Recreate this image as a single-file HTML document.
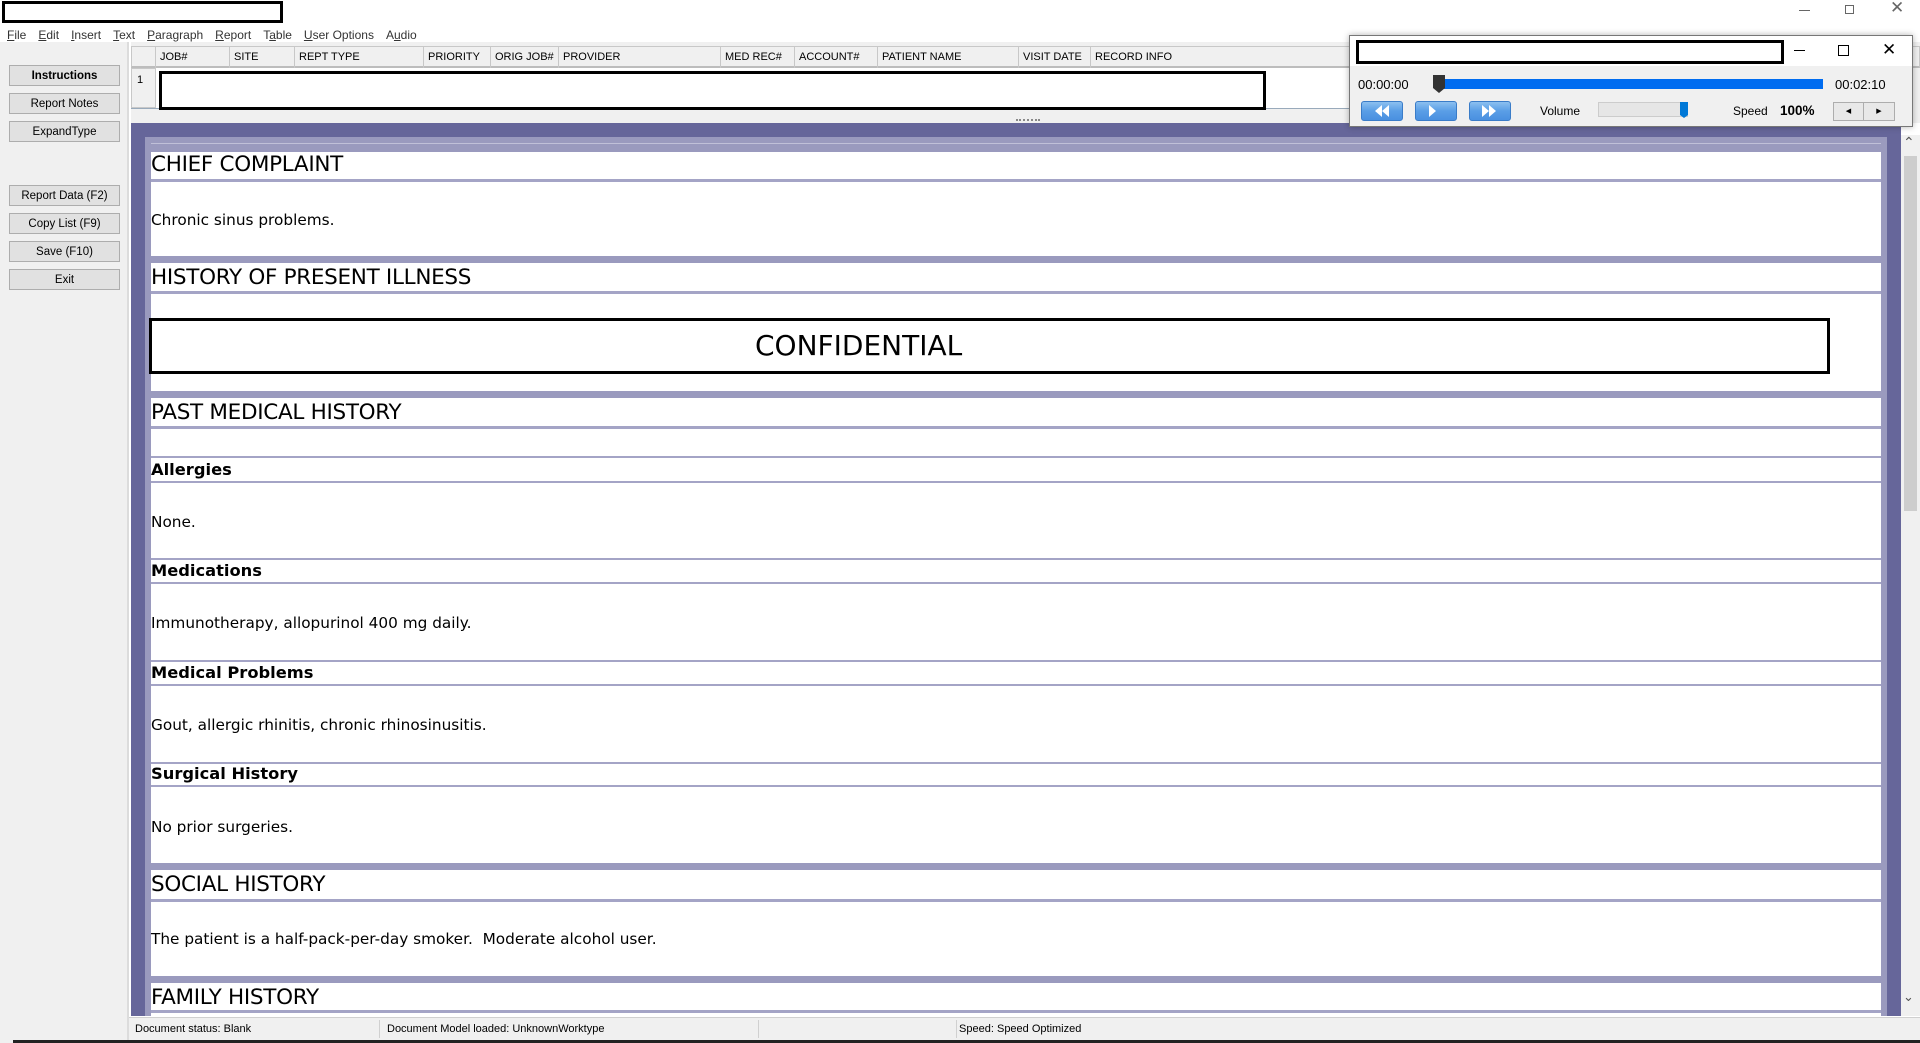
<!DOCTYPE html>
<html><head><meta charset="utf-8"><style>
*{margin:0;padding:0;box-sizing:border-box}
body{width:1920px;height:1043px;overflow:hidden;background:#fff;font-family:"Liberation Sans",sans-serif;position:relative}
.a{position:absolute}
.menu span{margin-right:12px;font-size:12px;color:#333}
.btn{position:absolute;left:9px;width:111px;height:21px;background:#e1e1e1;border:1px solid #adadad;font-size:11.5px;text-align:center;line-height:20px;color:#000}
.gh{position:absolute;top:47px;height:21px;font-size:11px;line-height:21px;padding-left:4px;border-right:1px solid #c8c8c8;color:#000}
.ed{font-family:"DejaVu Sans",sans-serif;color:#000}
.hd{position:absolute;left:151px;font-size:21.5px;white-space:nowrap;letter-spacing:-0.3px}
.tx{position:absolute;left:151px;font-size:15.3px;white-space:nowrap}
.sb{position:absolute;left:151px;font-size:16.3px;font-weight:bold;white-space:nowrap}
.band{position:absolute;left:151px;width:1730px;background:#9a9abe}
.ln{position:absolute;left:151px;width:1730px;height:2px;background:#a4a4c6}
.pb{position:absolute;top:101px;width:42px;height:20px;border:1px solid #3a7cc8;border-radius:3px;background:linear-gradient(#8cc0f0,#5a9ee6 50%,#4a90e0)}
</style></head><body>
<div class="a" style="left:2px;top:1px;width:281px;height:22px;border:3px solid #000"></div>
<div class="a menu" style="left:7px;top:26px"><span><u>F</u>ile</span><span><u>E</u>dit</span><span><u>I</u>nsert</span><span><u>T</u>ext</span><span><u>P</u>aragraph</span><span><u>R</u>eport</span><span>T<u>a</u>ble</span><span><u>U</u>ser Options</span><span>A<u>u</u>dio</span></div>
<div class="a" style="left:1799px;top:10px;width:11px;height:1px;background:#666"></div>
<div class="a" style="left:1845px;top:5px;width:9px;height:9px;border:1px solid #666"></div>
<div class="a" style="left:1890px;top:-2px;font-size:17px;color:#666">✕</div>
<!-- left panel -->
<div class="a" style="left:0;top:42px;width:129px;height:1001px;background:#f0f0f0;border-right:2px solid #dcdcdc"></div>
<div class="btn" style="top:65px;font-weight:bold">Instructions</div>
<div class="btn" style="top:93px">Report Notes</div>
<div class="btn" style="top:121px">ExpandType</div>
<div class="btn" style="top:185px">Report Data (F2)</div>
<div class="btn" style="top:213px">Copy List (F9)</div>
<div class="btn" style="top:241px">Save (F10)</div>
<div class="btn" style="top:269px">Exit</div>
<!-- grid -->
<div class="a" style="left:131px;top:42px;width:1789px;height:81px;background:#f0f0f0"></div>
<div class="a" style="left:131px;top:46px;width:1789px;height:22px;background:#f0f0f0;border:1px solid #c8c8c8;border-bottom:2px solid #bdbdbd"></div>
<div class="gh" style="left:131px;width:25px"></div>
<div class="gh" style="left:156px;width:74px">JOB#</div>
<div class="gh" style="left:230px;width:65px">SITE</div>
<div class="gh" style="left:295px;width:129px">REPT TYPE</div>
<div class="gh" style="left:424px;width:67px">PRIORITY</div>
<div class="gh" style="left:491px;width:68px">ORIG JOB#</div>
<div class="gh" style="left:559px;width:162px">PROVIDER</div>
<div class="gh" style="left:721px;width:74px">MED REC#</div>
<div class="gh" style="left:795px;width:83px">ACCOUNT#</div>
<div class="gh" style="left:878px;width:141px">PATIENT NAME</div>
<div class="gh" style="left:1019px;width:72px">VISIT DATE</div>
<div class="gh" style="left:1091px;width:260px">RECORD INFO</div>
<div class="a" style="left:131px;top:68px;width:25px;height:40px;background:#f0f0f0;border:1px solid #c8c8c8;font-size:11px;padding:5px 0 0 5px">1</div>
<div class="a" style="left:156px;top:68px;width:1200px;height:40px;background:#fff"></div>
<div class="a" style="left:131px;top:108px;width:1220px;height:1px;background:#9ab"></div>
<div class="a" style="left:159px;top:71px;width:1107px;height:39px;border:3px solid #000"></div>
<div class="a" style="left:1016px;top:119px;width:24px;height:2px;border-top:2px dotted #888"></div>
<!-- editor -->
<div class="a" style="left:131px;top:123px;width:1770px;height:893px;background:#66669a"></div>
<div class="a" style="left:145px;top:137px;width:1742px;height:879px;background:#9a9abe"></div>
<div class="a" style="left:151px;top:146px;width:1730px;height:870px;background:#fff"></div>
<div class="band" style="top:146px;height:6px"></div>
<div class="band" style="top:143px;height:1px;background:#c0c0d8"></div>
<div class="ed">
<div class="hd" style="top:152px">CHIEF COMPLAINT</div>
<div class="ln" style="top:179px;height:3px"></div>
<div class="tx" style="top:211px">Chronic sinus problems.</div>
<div class="band" style="top:256px;height:7px"></div>
<div class="hd" style="top:265px">HISTORY OF PRESENT ILLNESS</div>
<div class="ln" style="top:291px;height:3px"></div>
<div class="a" style="left:149px;top:318px;width:1681px;height:56px;border:3px solid #000;font-size:28px;padding-left:603px;line-height:50px;white-space:nowrap">CONFIDENTIAL</div>
<div class="band" style="top:391px;height:7px"></div>
<div class="hd" style="top:400px">PAST MEDICAL HISTORY</div>
<div class="ln" style="top:426px;height:3px"></div>
<div class="ln" style="top:456px"></div>
<div class="sb" style="top:460px">Allergies</div>
<div class="ln" style="top:481px"></div>
<div class="tx" style="top:513px">None.</div>
<div class="ln" style="top:558px"></div>
<div class="sb" style="top:561px">Medications</div>
<div class="ln" style="top:582px"></div>
<div class="tx" style="top:614px">Immunotherapy, allopurinol 400 mg daily.</div>
<div class="ln" style="top:660px"></div>
<div class="sb" style="top:663px">Medical Problems</div>
<div class="ln" style="top:684px"></div>
<div class="tx" style="top:716px">Gout, allergic rhinitis, chronic rhinosinusitis.</div>
<div class="ln" style="top:762px"></div>
<div class="sb" style="top:764px">Surgical History</div>
<div class="ln" style="top:785px"></div>
<div class="tx" style="top:818px">No prior surgeries.</div>
<div class="band" style="top:863px;height:7px"></div>
<div class="hd" style="top:872px">SOCIAL HISTORY</div>
<div class="ln" style="top:899px;height:3px"></div>
<div class="tx" style="top:930px">The patient is a half-pack-per-day smoker.&nbsp; Moderate alcohol user.</div>
<div class="band" style="top:976px;height:7px"></div>
<div class="hd" style="top:985px">FAMILY HISTORY</div>
<div class="ln" style="top:1010px;height:3px"></div>
</div>
<!-- scrollbar -->
<div class="a" style="left:1901px;top:135px;width:19px;height:881px;background:#f0f0f0"></div>
<div class="a" style="left:1904px;top:156px;width:13px;height:355px;background:#cdcdcd"></div>
<div class="a" style="left:1903px;top:134px;font-size:14px;color:#555">⌃</div>
<div class="a" style="left:1903px;top:989px;font-size:13px;color:#555">⌄</div>
<!-- status -->
<div class="a" style="left:129px;top:1017px;width:1791px;height:23px;background:#f0f0f0;border-top:1px solid #d0d0d0;font-size:11px;line-height:23px">
<span class="a" style="left:6px">Document status: Blank</span>
<span class="a" style="left:258px;color:#000">Document Model loaded: UnknownWorktype</span>
<span class="a" style="left:250px;top:2px;width:1px;height:18px;background:#d0d0d0"></span>
<span class="a" style="left:629px;top:2px;width:1px;height:18px;background:#d0d0d0"></span>
<span class="a" style="left:827px;top:2px;width:1px;height:18px;background:#d0d0d0"></span>
<span class="a" style="left:827px">&nbsp;Speed: Speed Optimized</span>
</div>
<div class="a" style="left:13px;top:1040px;width:1907px;height:3px;background:#222"></div>
<!-- player -->
<div class="a" style="left:1349px;top:35px;width:564px;height:92px;background:#f0f0f0;border:1px solid #777;box-shadow:0 0 6px rgba(0,0,0,.3)"></div>
<div class="a" style="left:1350px;top:36px;width:562px;height:30px;background:#fff"></div>
<div class="a" style="left:1356px;top:40px;width:428px;height:24px;border:3px solid #000"></div>
<div class="a" style="left:1794px;top:50px;width:11px;height:1px;background:#000"></div>
<div class="a" style="left:1838px;top:45px;width:11px;height:11px;border:1px solid #000"></div>
<div class="a" style="left:1882px;top:40px;font-size:17px">✕</div>
<div class="a" style="left:1358px;top:77px;font-size:13px">00:00:00</div>
<div class="a" style="left:1835px;top:77px;font-size:13px">00:02:10</div>
<div class="a" style="left:1440px;top:79px;width:383px;height:10px;background:#006cf0"></div>
<svg class="a" style="left:1432px;top:74px" width="14" height="20"><path d="M1 1h12v13l-6 5l-6-5z" fill="#333"/></svg>
<div class="pb" style="left:1361px"></div><div class="pb" style="left:1415px"></div><div class="pb" style="left:1469px"></div>
<svg class="a" style="left:1361px;top:101px" width="160" height="20"><g fill="#fff"><path d="M21 4v12l-7-6z M28 4v12l-7-6z"/><path d="M68 4v12l7-6z"/><path d="M121 4v12l7-6z M128 4v12l7-6z"/></g></svg>
<div class="a" style="left:1540px;top:104px;font-size:12px">Volume</div>
<div class="a" style="left:1598px;top:102px;width:90px;height:15px;background:#e6e6e6;border:1px solid #ccc"></div>
<svg class="a" style="left:1680px;top:102px" width="9" height="17"><path d="M0 0h8v13l-4 3l-4-3z" fill="#0078d7"/></svg>
<div class="a" style="left:1733px;top:104px;font-size:12px">Speed</div>
<div class="a" style="left:1780px;top:103px;font-size:13.5px;font-weight:bold">100%</div>
<div class="a" style="left:1833px;top:102px;width:31px;height:19px;border:1px solid #adadad;background:#e8e8e8;font-size:7px;text-align:center;line-height:17px">◀</div>
<div class="a" style="left:1863px;top:102px;width:32px;height:19px;border:1px solid #adadad;background:#e8e8e8;font-size:7px;text-align:center;line-height:17px">▶</div>
</body></html>
